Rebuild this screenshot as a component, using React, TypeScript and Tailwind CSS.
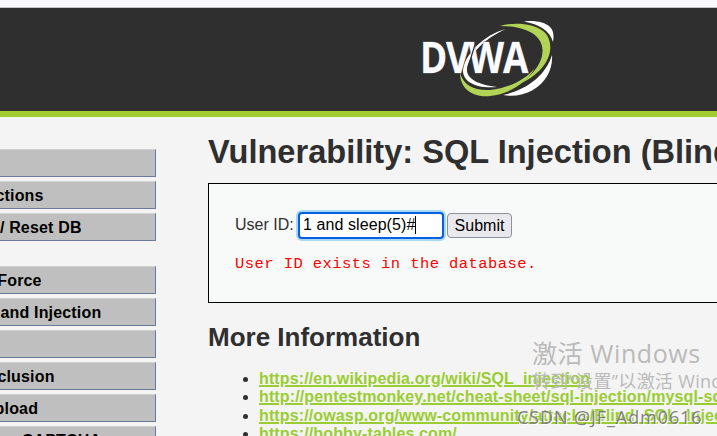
const menuGroups = [
  ["Home", "Instructions", "Setup / Reset DB"],
  [
    "Brute Force",
    "Command Injection",
    "CSRF",
    "File Inclusion",
    "File Upload",
    "Insecure CAPTCHA",
  ],
];

const links = [
  "https://en.wikipedia.org/wiki/SQL_injection",
  "http://pentestmonkey.net/cheat-sheet/sql-injection/mysql-sql-injection-cheat-sheet",
  "https://owasp.org/www-community/attacks/Blind_SQL_Injection",
  "https://bobby-tables.com/",
];

function Logo() {
  return (
    <svg width="140" height="80" viewBox="0 0 140 80" aria-label="DVWA">
      <path
        d="M103 1.5C113 0 124 2 129 7C133 11 133 17 132 22C129 11 118 4 103 1.5Z"
        fill="#fff"
      />
      <path
        d="M79 6C92 2 112 3 122 11C130 17 131 29 127 38C123 48 113 57 101 63C114 52 122 42 121.500 30C121 13 101 6 79 6Z"
        fill="#b1d456"
      />
      <path
        d="M131 35C132 49 125 62 112 70C103 75 92 77 82 75C106 70 125 55 131 35Z"
        fill="#fff"
      />
      <path
        d="M39 53C43 66 54 71 69 70C88 68 104 60 114 48C105 64 87 74 69 76C51 78 39 68 39 53Z"
        fill="#b1d456"
      />
      <path
        d="M85 9C66 17 47 34 46 50C46 59 58 65 76 67C56 69 42 62 42 51C43 35 62 15 85 9Z"
        fill="#fff"
      />
      <text
        x="-1"
        y="53"
        textLength="107"
        lengthAdjust="spacingAndGlyphs"
        letterSpacing="-1.5"
        fontFamily="Open Sans, sans-serif"
        fontSize="42.5"
        fontWeight="700"
        fill="#fbfbff"
        stroke="#646470"
        strokeWidth="0.8"
        paintOrder="stroke"
      >
        DVWA
      </text>
      <path d="M46.500 49L54.500 23" stroke="#2f2f2f" strokeWidth="1.2" />
    </svg>
  );
}

function Sidebar() {
  return (
    <nav className="-ml-[55px] flex w-[211px] shrink-0 flex-col gap-[25px] pt-8">
      {menuGroups.map((group, index) => (
        <ul key={index} className="flex flex-col gap-1">
          {group.map((item) => (
            <li
              key={item}
              className="h-7 border-t border-r border-b border-t-[#d0d0d0] border-r-[#6b7a99] border-b-[#6b7a99] bg-[#bfbfbf] pl-[5px] text-base leading-[28px] font-bold tracking-[0.17px] whitespace-nowrap text-black"
            >
              {item}
            </li>
          ))}
        </ul>
      ))}
    </nav>
  );
}

export default function App() {
  return (
    <div className="relative h-[436px] w-full overflow-hidden bg-[#f4f4f4] font-['Liberation_Sans',Arial,sans-serif] text-[#2f2f2f]">
      <div className="h-2 border-b border-[#c4c4c8] bg-[#f9f9fd]" />
      <header className="h-[109px] border-b-6 border-[#a1cc33] bg-[#2f2f2f] pt-3 pl-[421px]">
        <Logo />
      </header>

      <div className="flex">
        <Sidebar />
        <main className="ml-[52px] w-[620px] shrink-0 pt-4">
          <h1 className="text-[32.6px] leading-[38px] font-bold whitespace-nowrap">
            Vulnerability: SQL Injection (Blind)
          </h1>
          <div className="mt-3 h-[120px] border border-black bg-[#f8faf9] pt-[27px] pl-[26px]">
            <form className="flex h-[28px] items-center">
              <label className="w-[63px] text-base whitespace-nowrap">
                User ID:
              </label>
              <div className="flex h-[27px] w-[146px] items-center rounded-[4px] border-2 border-[#0560df] bg-white pl-[3px] text-base whitespace-nowrap text-black ring-2 ring-[#a9d8f7]">
                <span className="tracking-[0.08px]">1 and sleep(5)#</span>
                <span className="h-[18px] w-px bg-black" />
              </div>
              <button
                type="button"
                className="ml-[3px] h-[25px] w-[65px] rounded-[4px] border border-[#8f8f9d] bg-[#e9e9ed] text-base leading-[23px] text-black"
              >
                Submit
              </button>
            </form>
            <pre className="mt-[15px] font-['Liberation_Mono',monospace] text-[15.5px] leading-5 tracking-[0.43px] text-[#ff0000]">
              User ID exists in the database.
            </pre>
          </div>

          <h2 className="mt-[18px] text-[26px] leading-8 font-bold">
            More Information
          </h2>
          <ul className="mt-[17px] list-disc pl-[51px] text-base leading-[18.4px]">
            {links.map((link) => (
              <li key={link} className="whitespace-nowrap">
                <a className="font-bold tracking-[0.13px] text-[#9acd32] underline decoration-2">
                  {link}
                </a>
              </li>
            ))}
          </ul>
        </main>
      </div>

      {/* desktop watermarks */}
      <div className="absolute top-[337px] left-[532px] font-['Open_Sans','Noto_Sans_CJK_SC',sans-serif] whitespace-nowrap text-[#bababa]">
        <p className="text-[25px] leading-8 tracking-[0.6px]">激活 Windows</p>
        <p className="text-[18px] leading-6 tracking-[0.3px]">
          转到“设置”以激活 Windows。
        </p>
      </div>
      <div className="absolute top-[405px] left-[517px] font-['Noto_Sans',sans-serif] text-[18px] leading-6 tracking-[0.85px] whitespace-nowrap text-[#666]/80 [text-shadow:1px_1px_0_#fff]">
        CSDN @JF_Adm0616
      </div>
    </div>
  );
}
